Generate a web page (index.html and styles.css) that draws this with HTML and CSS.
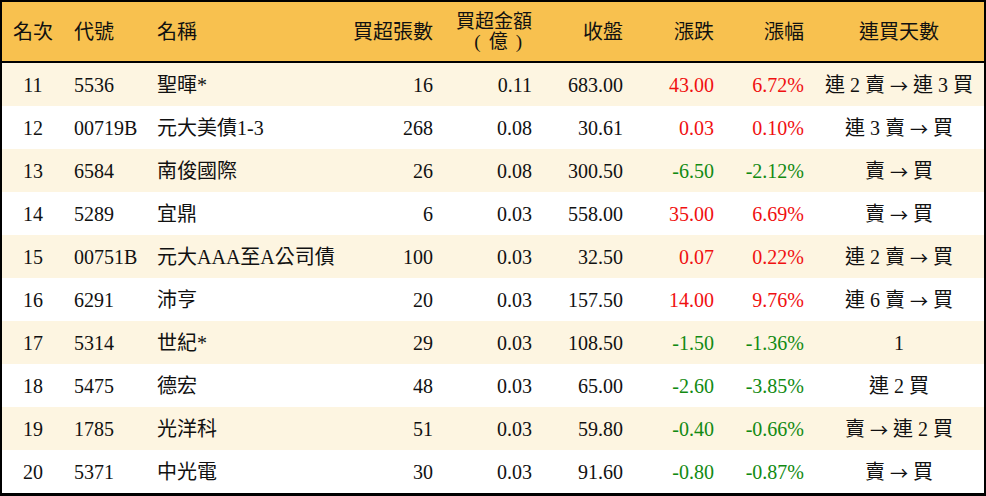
FILE: index.html
```html
<!DOCTYPE html>
<html lang="zh-Hant">
<head>
<meta charset="utf-8">
<title>買超排行</title>
<link rel="stylesheet" href="styles.css">
</head>
<body>
<div class="table">
  <div class="row head">
    <div class="c center">名次</div>
    <div class="c left">代號</div>
    <div class="c left">名稱</div>
    <div class="c right">買超張數</div>
    <div class="c right two"><span class="line">買超金額</span><span class="line paren">(億)</span></div>
    <div class="c right">收盤</div>
    <div class="c right">漲跌</div>
    <div class="c right">漲幅</div>
    <div class="c center">連買天數</div>
  </div>
  <div class="row odd">
    <div class="c center">11</div><div class="c left">5536</div><div class="c left">聖暉*</div>
    <div class="c right">16</div><div class="c right">0.11</div><div class="c right">683.00</div>
    <div class="c right up">43.00</div><div class="c right up">6.72%</div><div class="c center">連 2 賣 <span class="arrow">→</span> 連 3 買</div>
  </div>
  <div class="row">
    <div class="c center">12</div><div class="c left">00719B</div><div class="c left">元大美債1-3</div>
    <div class="c right">268</div><div class="c right">0.08</div><div class="c right">30.61</div>
    <div class="c right up">0.03</div><div class="c right up">0.10%</div><div class="c center">連 3 賣 <span class="arrow">→</span> 買</div>
  </div>
  <div class="row odd">
    <div class="c center">13</div><div class="c left">6584</div><div class="c left">南俊國際</div>
    <div class="c right">26</div><div class="c right">0.08</div><div class="c right">300.50</div>
    <div class="c right down">-6.50</div><div class="c right down">-2.12%</div><div class="c center">賣 <span class="arrow">→</span> 買</div>
  </div>
  <div class="row">
    <div class="c center">14</div><div class="c left">5289</div><div class="c left">宜鼎</div>
    <div class="c right">6</div><div class="c right">0.03</div><div class="c right">558.00</div>
    <div class="c right up">35.00</div><div class="c right up">6.69%</div><div class="c center">賣 <span class="arrow">→</span> 買</div>
  </div>
  <div class="row odd">
    <div class="c center">15</div><div class="c left">00751B</div><div class="c left">元大AAA至A公司債</div>
    <div class="c right">100</div><div class="c right">0.03</div><div class="c right">32.50</div>
    <div class="c right up">0.07</div><div class="c right up">0.22%</div><div class="c center">連 2 賣 <span class="arrow">→</span> 買</div>
  </div>
  <div class="row">
    <div class="c center">16</div><div class="c left">6291</div><div class="c left">沛亨</div>
    <div class="c right">20</div><div class="c right">0.03</div><div class="c right">157.50</div>
    <div class="c right up">14.00</div><div class="c right up">9.76%</div><div class="c center">連 6 賣 <span class="arrow">→</span> 買</div>
  </div>
  <div class="row odd">
    <div class="c center">17</div><div class="c left">5314</div><div class="c left">世紀*</div>
    <div class="c right">29</div><div class="c right">0.03</div><div class="c right">108.50</div>
    <div class="c right down">-1.50</div><div class="c right down">-1.36%</div><div class="c center">1</div>
  </div>
  <div class="row">
    <div class="c center">18</div><div class="c left">5475</div><div class="c left">德宏</div>
    <div class="c right">48</div><div class="c right">0.03</div><div class="c right">65.00</div>
    <div class="c right down">-2.60</div><div class="c right down">-3.85%</div><div class="c center">連 2 買</div>
  </div>
  <div class="row odd">
    <div class="c center">19</div><div class="c left">1785</div><div class="c left">光洋科</div>
    <div class="c right">51</div><div class="c right">0.03</div><div class="c right">59.80</div>
    <div class="c right down">-0.40</div><div class="c right down">-0.66%</div><div class="c center">賣 <span class="arrow">→</span> 連 2 買</div>
  </div>
  <div class="row">
    <div class="c center">20</div><div class="c left">5371</div><div class="c left">中光電</div>
    <div class="c right">30</div><div class="c right">0.03</div><div class="c right">91.60</div>
    <div class="c right down">-0.80</div><div class="c right down">-0.87%</div><div class="c center">賣 <span class="arrow">→</span> 買</div>
  </div>
</div>
</body>
</html>
```

FILE: styles.css
```css
html, body {
  margin: 0;
  padding: 0;
  background: #ffffff;
}
body {
  font-family: "Liberation Serif", "Noto Sans CJK TC", serif;
  font-size: 20px;
  color: #111111;
}
.table {
  width: 986px;
  height: 496px;
  box-sizing: border-box;
  border: 2px solid #000000;
  border-bottom-width: 3px;
  display: flex;
  flex-direction: column;
}
.row {
  display: grid;
  grid-template-columns: 62px 83px 196px 100px 99px 91px 91px 90px 170px;
  height: 43px;
  background: #ffffff;
}
.row.odd {
  background: #fdf5e1;
}
.row.head {
  height: 59px;
  background: #f8c14f;
  border-bottom: 2px solid #000000;
}
.c {
  display: flex;
  align-items: center;
  white-space: pre;
  padding: 0 10px;
  line-height: 1;
}
.center { justify-content: center; }
.left { justify-content: flex-start; }
.right { justify-content: flex-end; }
.two {
  flex-direction: column;
  align-items: flex-end;
  justify-content: center;
  gap: 2px;
}
.two .line {
  display: block;
  height: 18px;
  line-height: 18px;
  font-size: 19px;
}
.two .paren {
  letter-spacing: 8px;
  margin-right: 2px;
}
.arrow {
  font-family: "Noto Sans CJK TC", sans-serif;
  font-size: 18px;
}
.up { color: #f01010; }
.down { color: #128a12; }
```
